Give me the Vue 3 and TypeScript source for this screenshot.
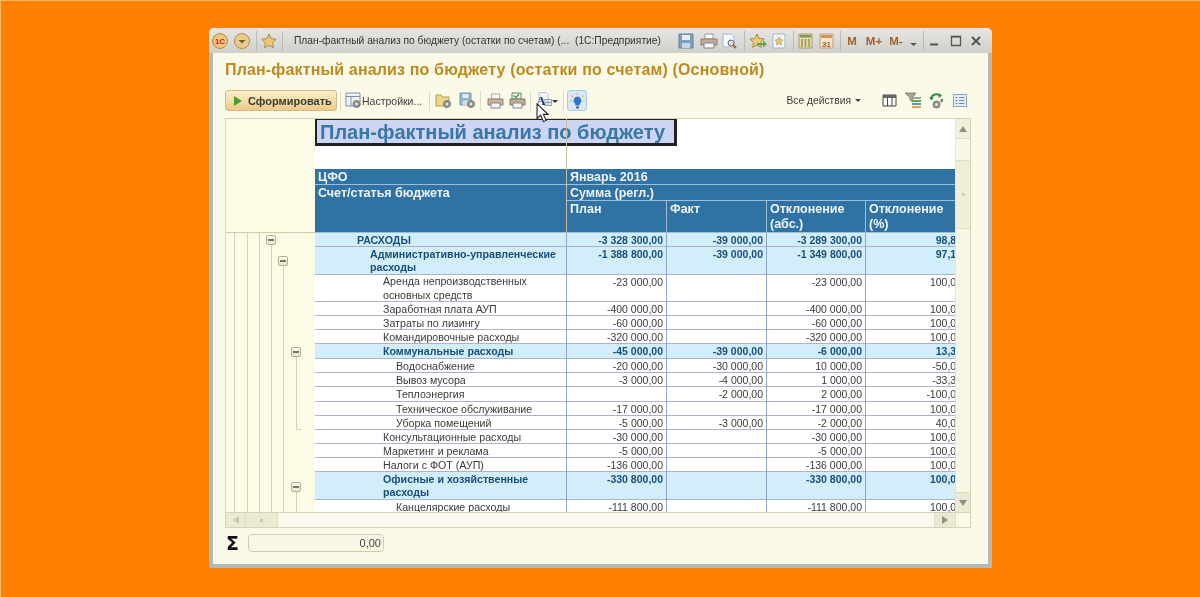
<script setup lang="ts">
interface Row { name: string; lvl: number; kind: 'top' | 'group' | 'leaf'; h: number; v: string[] }
const mk = (name: string, lvl: number, kind: Row['kind'], h: number, a: string, b: string, c: string, d: string): Row => ({ name, lvl, kind, h, v: [a, b, c, d] })
const rows: Row[] = [
  mk('РАСХОДЫ', 0, 'top', 14, '-3 328 300,00', '-39 000,00', '-3 289 300,00', '98,83'),
  mk('Административно-управленческие расходы', 1, 'top', 27.5, '-1 388 800,00', '-39 000,00', '-1 349 800,00', '97,19'),
  mk('Аренда непроизводственных основных средств', 2, 'leaf', 27.5, '-23 000,00', '', '-23 000,00', '100,00'),
  mk('Заработная плата АУП', 2, 'leaf', 14, '-400 000,00', '', '-400 000,00', '100,00'),
  mk('Затраты по лизингу', 2, 'leaf', 14, '-60 000,00', '', '-60 000,00', '100,00'),
  mk('Командировочные расходы', 2, 'leaf', 14, '-320 000,00', '', '-320 000,00', '100,00'),
  mk('Коммунальные расходы', 2, 'group', 15, '-45 000,00', '-39 000,00', '-6 000,00', '13,33'),
  mk('Водоснабжение', 3, 'leaf', 14, '-20 000,00', '-30 000,00', '10 000,00', '-50,00'),
  mk('Вывоз мусора', 3, 'leaf', 14, '-3 000,00', '-4 000,00', '1 000,00', '-33,33'),
  mk('Теплоэнергия', 3, 'leaf', 15, '', '-2 000,00', '2 000,00', '-100,00'),
  mk('Техническое обслуживание', 3, 'leaf', 14, '-17 000,00', '', '-17 000,00', '100,00'),
  mk('Уборка помещений', 3, 'leaf', 14, '-5 000,00', '-3 000,00', '-2 000,00', '40,00'),
  mk('Консультационные расходы', 2, 'leaf', 14, '-30 000,00', '', '-30 000,00', '100,00'),
  mk('Маркетинг и реклама', 2, 'leaf', 14, '-5 000,00', '', '-5 000,00', '100,00'),
  mk('Налоги с ФОТ (АУП)', 2, 'leaf', 14, '-136 000,00', '', '-136 000,00', '100,00'),
  mk('Офисные и хозяйственные расходы', 2, 'group', 28, '-330 800,00', '', '-330 800,00', '100,00'),
  mk('Канцелярские расходы', 3, 'leaf', 14, '-111 800,00', '', '-111 800,00', '100,00'),
]
const guides = [8, 21, 33]
const treeLines = [
  { left: 45, top: 10, height: 270 },
  { left: 57, top: 32, height: 248 },
  { left: 70, top: 123, height: 74 },
  { left: 70, top: 258, height: 22 },
]
const boxes = [
  { left: 40, top: 2 },
  { left: 52, top: 23 },
  { left: 65, top: 114 },
  { left: 65, top: 249 },
]
</script>

<template>
  <div class="page">
    <div class="window">
      <header class="titlebar">
        <svg width="18" height="18" viewBox="0 0 18 18"><circle cx="9" cy="9" r="7.5" fill="#f0c47c" stroke="#b98a4a"/><text x="9" y="12" text-anchor="middle" class="logo">1C</text></svg>
        <svg class="ml4" width="18" height="18" viewBox="0 0 18 18"><circle cx="9" cy="9" r="7.5" fill="#e9c98e" stroke="#b98a4a"/><path d="M5.500 8h7L9 11.500z" fill="#7a5a2a"/></svg>
        <i class="tsep ml5"></i>
        <svg class="ml3" width="18" height="18" viewBox="0 0 18 18"><path d="M9 2l2.200 4.600 5 .7-3.600 3.500.9 5L9 13.400l-4.500 2.400.9-5L1.800 7.300l5-.7z" fill="#f0c674" stroke="#a98a50"/></svg>
        <i class="tsep ml4"></i>
        <span class="wintitle">План-фактный анализ по бюджету (остатки по счетам) (...&nbsp; (1С:Предприятие)</span>
        <div class="ticons">
          <svg width="16" height="16" viewBox="0 0 16 16"><path d="M1 1h14v14H1z" fill="#7d9fc0" stroke="#64809c"/><path d="M4 2h8v5H4z" fill="#e6edf3"/><path d="M4 10h8v5H4z" fill="#c9d4de"/></svg>
          <svg class="ml6" width="18" height="16" viewBox="0 0 18 16"><path d="M5 1h8v5H5z" fill="#fff" stroke="#999"/><path d="M1 6h16v6H1z" fill="#c9a98f" stroke="#8a8078"/><path d="M4 10h10v5H4z" fill="#f4f4f4" stroke="#888"/></svg>
          <svg class="ml3" width="16" height="16" viewBox="0 0 16 16"><path d="M2 1h8l3 3v10H2z" fill="#f5f8fb" stroke="#a9b6c4"/><circle cx="10" cy="10" r="3" fill="#dde6ee" stroke="#6a6a6a"/><path d="M12 12l3 3" stroke="#a65d3a" stroke-width="2"/></svg>
          <i class="tsep ml7"></i>
          <svg class="ml4" width="18" height="16" viewBox="0 0 18 16"><path d="M8 1l2 4.400 5 .6-3.600 3.300.9 5L8 12l-4.300 2.300.9-5L1 6l5-.6z" fill="#eecb72" stroke="#a98a50"/><path d="M8 10h6V7.500l4 3.500-4 3.500V12H8z" fill="#5aa83c"/></svg>
          <svg class="ml5" width="14" height="16" viewBox="0 0 14 16"><path d="M1 1h12v14H1z" fill="#f2f6fa" stroke="#a9b6c4"/><path d="M7 4l1.300 2.600 2.700.4-2 2 .5 2.800L7 10.500l-2.500 1.300.5-2.800-2-2 2.700-.4z" fill="#ecc96e" stroke="#a98a50" stroke-width=".6"/></svg>
          <i class="tsep ml7"></i>
          <svg class="ml4" width="15" height="16" viewBox="0 0 15 16"><path d="M1 1h13v14H1z" fill="#ecdba6" stroke="#a99a6a"/><path d="M2 2h11v2.500H2z" fill="#7f9a5b"/><path d="M4 6v8M7.500 6v8M11 6v8" stroke="#8a9a5a" stroke-width="1.500"/></svg>
          <svg class="ml6" width="15" height="16" viewBox="0 0 15 16"><path d="M1 1h13v14H1z" fill="#f6e6c6" stroke="#b7a27a"/><path d="M2 2h11v3H2z" fill="#d98d5a"/><text x="7.500" y="13.500" text-anchor="middle" class="cal-t">31</text></svg>
          <i class="tsep ml6"></i>
          <span class="mem">M</span><span class="mem">M+</span><span class="mem">M-</span>
          <svg class="ml2" width="9" height="14" viewBox="0 0 9 14"><path d="M1 9h7L4.500 12z" fill="#555"/></svg>
          <i class="tsep ml5"></i>
          <svg class="ml5" width="11" height="12" viewBox="0 0 11 12"><path d="M1 9.500h8" stroke="#555" stroke-width="2"/></svg>
          <svg class="ml10" width="12" height="12" viewBox="0 0 12 12"><path d="M1.500 1.500h9v9h-9z" fill="none" stroke="#555" stroke-width="1.300"/><path d="M1 1.700h10" stroke="#555" stroke-width="1.500"/></svg>
          <svg class="ml8" width="12" height="12" viewBox="0 0 12 12"><path d="M2 2l8 8M10 2l-8 8" stroke="#555" stroke-width="2"/></svg>
        </div>
      </header>

      <main class="body">
        <h1 class="heading">План-фактный анализ по бюджету (остатки по счетам) (Основной)</h1>

        <div class="toolbar">
          <button class="primary"><span class="tri"></span>Сформировать</button>
          <i class="sep ml3"></i>
          <svg class="ml4" width="17" height="17" viewBox="0 0 17 17"><path d="M1 1h14v13H1z" fill="#eef2f6" stroke="#7f92a6"/><path d="M1 4.500h14M6 4.500V14" stroke="#7f92a6"/><circle cx="11.500" cy="12" r="3.500" fill="#9a9a92" stroke="#777"/><circle cx="11.500" cy="12" r="1.200" fill="#eee"/></svg>
          <span class="setup">Настройки...</span>
          <i class="sep ml7"></i>
          <svg class="ml5" width="17" height="17" viewBox="0 0 17 17"><path d="M1 3h5l1.500 2H14v9H1z" fill="#efd68c" stroke="#b79a50"/><circle cx="12" cy="12" r="3.500" fill="#9a9a92" stroke="#777"/><circle cx="12" cy="12" r="1.200" fill="#eee"/></svg>
          <svg class="ml7" width="17" height="17" viewBox="0 0 17 17"><path d="M1 1h11v12H1z" fill="#8fb2d0" stroke="#7a9ab8"/><path d="M3.500 2h6v4h-6z" fill="#e6edf3"/><path d="M3.500 8.500h6V13h-6z" fill="#d1dbe4"/><circle cx="12" cy="12" r="3.500" fill="#9a9a92" stroke="#777"/><circle cx="12" cy="12" r="1.200" fill="#eee"/></svg>
          <i class="sep ml4"></i>
          <svg class="ml6" width="17" height="16" viewBox="0 0 17 16"><path d="M4.500 1h8v5h-8z" fill="#fff" stroke="#aaa"/><path d="M1 6h15v6H1z" fill="#c9b09a" stroke="#8a8078"/><path d="M4 10h9v5H4z" fill="#f4f4f4" stroke="#888"/></svg>
          <svg class="ml5" width="17" height="17" viewBox="0 0 17 17"><path d="M3 1h9v6H3z" fill="#fff" stroke="#5a8a4a"/><path d="M4.500 3.500L7 5.500l3-3.500" fill="none" stroke="#3c9a3c" stroke-width="1.300"/><path d="M1 7h15v6H1z" fill="#c3ab94" stroke="#7f7a70"/><path d="M4 11h9v5H4z" fill="#f4f4f4" stroke="#888"/></svg>
          <i class="sep ml4"></i>
          <svg class="ml6" width="15" height="17" viewBox="0 0 15 17"><path d="M2 .5h7l2 2v5H2z" fill="#f5f8fb" stroke="#b7c2cd"/><path d="M8 7.500h6.500v6H8zM8 10.500h6.500M11 7.500v6" fill="#eef2f6" stroke="#8ca0b4"/><text x="-.5" y="13" class="a-t">A</text></svg>
          <svg class="caret" width="7" height="5" viewBox="0 0 7 5"><path d="M0 1h6L3 4z" fill="#333"/></svg>
          <i class="sep ml4"></i>
          <button class="bulb ml3">
            <svg width="17" height="18" viewBox="0 0 17 18"><path d="M8.500 4.500a4 4 0 0 0-2.500 7l.6 2h3.800l.6-2a4 4 0 0 0-2.500-7z" fill="#2f74c8"/><path d="M7 14.500h3v2H7z" fill="#45658f"/><path d="M8.500 1v2M2.500 3.500L4 5M14.500 3.500L13 5M1 9h2M14 9h2" stroke="#e2b33e" stroke-width="1.200"/></svg>
          </button>
          <span class="spacer"></span>
          <span class="all">Все действия<svg class="c2" width="7" height="5" viewBox="0 0 7 5"><path d="M0 1h6L3 4z" fill="#444"/></svg></span>
          <svg class="ml20" width="15" height="13" viewBox="0 0 15 13"><path d="M1 1h13v11H1z" fill="#fff" stroke="#444"/><path d="M1 1h13v3H1z" fill="#666"/><path d="M5.500 4v8M10 4v8" stroke="#444"/></svg>
          <svg class="ml8" width="16" height="17" viewBox="0 0 16 17"><path d="M0 1h11L7.500 5.500V10L5 8V5.500z" fill="#a9a597" stroke="#8a8678"/><path d="M7 6h9" stroke="#9aa5a0" stroke-width="2"/><path d="M7 9h9" stroke="#6fa84c" stroke-width="2"/><path d="M7 12h9" stroke="#4f9bc9" stroke-width="2"/><path d="M7 15h9" stroke="#e0a845" stroke-width="2"/></svg>
          <svg class="ml7" width="16" height="17" viewBox="0 0 16 17"><path d="M3 7a5.500 5.500 0 0 1 9.500-3M14 7a5 5 0 0 1-1 3" fill="none" stroke="#2e8f44" stroke-width="2"/><path d="M10.500 1l3.500 2.500-3.500 2.500z" fill="#2e8f44"/><path d="M1 5.500l2.500 3 2.500-3z" fill="#2e8f44"/><circle cx="8.500" cy="12.500" r="3.500" fill="#9a9a92" stroke="#777"/><circle cx="8.500" cy="12.500" r="1.200" fill="#eee"/></svg>
          <svg class="ml9 endicon" width="14" height="13" viewBox="0 0 14 13"><path d="M.5 .5h13v12H.5z" fill="#e6eef6" stroke="#8ca3ba"/><path d="M2.500 3.500h2M2.500 6.500h2M2.500 9.500h2M6 3.500h5.500M6 6.500h5.500M6 9.500h5.500" stroke="#6a88a6"/></svg>
        </div>

        <section class="grid">
          <div class="viewport">
            <aside class="gutter">
              <div class="gutter-head"></div>
              <div class="gutter-tree">
                <i v-for="g in guides" :key="g" class="guide" :style="{ left: g + 'px' }"></i>
                <i v-for="(t, i) in treeLines" :key="'t' + i" class="guide" :style="{ left: t.left + 'px', top: t.top + 'px', height: t.height + 'px' }"></i>
                <i class="tick"></i>
                <span v-for="(b, i) in boxes" :key="'b' + i" class="minus" :style="{ left: b.left + 'px', top: b.top + 'px' }"></span>
              </div>
            </aside>
            <div class="sheet">
              <div class="report-title"><span>План-фактный анализ по бюджету</span></div>
              <div class="blank"></div>
              <div class="hrow h16"><div class="c name">ЦФО</div><div class="c span">Январь 2016</div></div>
              <div class="hmerge">
                <div class="c name">Счет/статья бюджета</div>
                <div class="hright">
                  <div class="c sub">Сумма (регл.)</div>
                  <div class="hcols">
                    <div class="c">План</div><div class="c">Факт</div><div class="c">Отклонение (абс.)</div><div class="c">Отклонение (%)</div>
                  </div>
                </div>
              </div>
              <div v-for="r in rows" :key="r.name" class="row" :class="r.kind" :style="{ height: r.h + 'px' }">
                <div class="cell name-cell" :class="'lvl' + r.lvl">{{ r.name }}</div>
                <div v-for="(val, j) in r.v" :key="j" class="cell num">{{ val }}</div>
              </div>
              <i class="freeze"></i>
            </div>
            <div class="vscroll">
              <span class="sbtn"><i class="arrow up"></i></span>
              <span class="strack t1"></span>
              <span class="sthumb"><i></i></span>
              <span class="grow"></span>
              <span class="sbtn"><i class="arrow down"></i></span>
            </div>
          </div>
          <div class="hscroll">
            <span class="hbtn w"><i class="arrow left"></i></span>
            <span class="hbtn x"><i></i></span>
            <span class="grow"></span>
            <span class="hbtn right-btn"><i class="arrow right"></i></span>
            <span class="corner"></span>
          </div>
        </section>

        <div class="sumbar">
          <span class="sigma">Σ</span>
          <span class="sumbox">0,00</span>
        </div>
      </main>
    </div>

    <svg class="cursor" width="13" height="20" viewBox="0 0 14 22"><path d="M1 1v16l4-3.500 3 7 3-1.300-3-6.700h5z" fill="#fff" stroke="#222" stroke-width="1.200"/></svg>
  </div>
</template>

<style>
html, body { margin: 0; background: #ff8000; }
</style>

<style scoped>
* { box-sizing: border-box; }
.page {
  position: relative;
  width: 1200px;
  height: 597px;
  background: #ff8000;
  padding: 28px 208px 29px 209px;
  font-family: "Liberation Sans", Arial, sans-serif;
  overflow: hidden;
  box-shadow: inset 1px 1px 0 #f7b862;
  filter: blur(0.35px);
}
.ml2 { margin-left: 2px; }
.ml3 { margin-left: 3px; }
.ml4 { margin-left: 4px; }
.ml5 { margin-left: 5px; }
.ml6 { margin-left: 6px; }
.ml7 { margin-left: 7px; }
.ml8 { margin-left: 8px; }
.ml9 { margin-left: 9px; }
.ml10 { margin-left: 10px; }
.ml20 { margin-left: 20px; }
svg { flex: none; display: block; }
.window {
  height: 540px;
  display: flex;
  flex-direction: column;
  border: 1px solid #b9b9b4;
  border-width: 0 4px 4px 4px;
  border-radius: 5px 5px 0 0;
  background: #fbfae9;
}
.titlebar {
  height: 25px;
  margin: 0 -4px;
  padding: 0 10px 0 2px;
  display: flex;
  align-items: center;
  background: linear-gradient(#e6e6e3, #cfcfcb);
  border-radius: 5px 5px 0 0;
  flex: none;
}
.logo { font: bold 8px "Liberation Sans", sans-serif; fill: #c02a10; }
.tsep { width: 1px; height: 20px; background: #b9b9b5; flex: none; }
.wintitle { font-size: 10.25px; color: #333; white-space: nowrap; margin-left: 11px; }
.ticons { margin-left: auto; display: flex; align-items: center; }
.mem { width: 22px; text-align: center; color: #a4602c; font-weight: bold; font-size: 11.5px; }
.cal-t { font: bold 8px "Liberation Sans", sans-serif; fill: #b4552a; }
.body {
  flex: 1;
  min-height: 0;
  padding: 0 16px 0 12px;
  display: flex;
  flex-direction: column;
}
.heading {
  margin: 7px 0 0;
  height: 20px;
  font-size: 16px;
  line-height: 20px;
  font-weight: bold;
  color: #bd8a1f;
  white-space: nowrap;
  letter-spacing: 0.15px;
}
.toolbar {
  margin-top: 8px;
  height: 25px;
  display: flex;
  align-items: center;
  flex: none;
}
.primary {
  width: 112px;
  height: 21px;
  padding: 0 0 0 8px;
  border: 1px solid #d3b981;
  border-radius: 3px;
  background: linear-gradient(#fdefca, #eec98b);
  font: bold 11px "Liberation Sans", sans-serif;
  color: #3a3a2c;
  display: flex;
  align-items: center;
  gap: 6px;
  white-space: nowrap;
}
.tri { width: 0; height: 0; border-left: 8px solid #4c9e2c; border-top: 5px solid transparent; border-bottom: 5px solid transparent; }
.sep { width: 1px; height: 20px; background: #dcdac8; flex: none; }
.setup { font-size: 10.5px; color: #3c3c3c; white-space: nowrap; width: 60px; }
.a-t { font: bold 12.5px "Liberation Serif", serif; fill: #17308a; }
.caret { margin-top: 1px; }
.bulb {
  width: 20px;
  height: 21px;
  padding: 0;
  border: 1px solid #aac8e8;
  border-radius: 3px;
  background: #d8e8f8;
  display: flex;
  align-items: center;
  justify-content: center;
}
.spacer { flex: 1; }
.all { font-size: 10.25px; color: #3c3c3c; white-space: nowrap; display: flex; align-items: center; }
.c2 { margin-left: 4px; }
.endicon { margin-right: 5px; }
.grid {
  margin-top: 5px;
  width: 746px;
  height: 410px;
  border: 1px solid #d5d3b6;
  display: flex;
  flex-direction: column;
  flex: none;
  background: #fbfae9;
}
.viewport { flex: 1; min-height: 0; display: flex; overflow: hidden; }
.gutter { width: 89px; flex: none; display: flex; flex-direction: column; background: #fbfbe6; }
.gutter-head { height: 114px; border-bottom: 1px solid #cfccaa; flex: none; }
.gutter-tree { position: relative; flex: 1; }
.guide { position: absolute; top: 0; bottom: 0; width: 1px; background: #d5d3ae; }
.tick { position: absolute; left: 70px; top: 196px; width: 5px; height: 1px; background: #d5d3ae; }
.minus {
  position: absolute;
  width: 10px;
  height: 10px;
  border: 1px solid #b3b08c;
  border-radius: 2px;
  background: linear-gradient(#fdfdf4, #e7e5cc);
}
.minus::after { content: ""; position: absolute; left: 1px; right: 1px; top: 3px; height: 2px; background: #77766a; }
.sheet { position: relative; width: 640px; flex: none; background: #fff; overflow: hidden; }
.report-title { height: 27px; }
.report-title span {
  display: block;
  width: 362px;
  height: 27px;
  padding-left: 3px;
  background: #ccd6f2;
  border: 1px solid #222;
  border-width: 1px 3px 3px 2px;
  font-size: 20px;
  line-height: 24px;
  font-weight: bold;
  color: #3a77a8;
  white-space: nowrap;
}
.blank { height: 23px; }
.hrow, .hmerge { display: grid; grid-template-columns: 251px 1fr; background: #2f72a3; color: #eef4f8; font-size: 12.5px; font-weight: bold; }
.h16 { height: 16px; border-bottom: 1px solid #9fbdd6; }
.hmerge { height: 48px; border-bottom: 1px solid #9fbdd6; }
.c { padding: 1px 3px 0; line-height: 15px; white-space: normal; overflow: hidden; }
.hright { display: flex; flex-direction: column; border-left: 1px solid #9fbdd6; }
.span { border-left: 1px solid #9fbdd6; }
.sub { height: 16px; border-bottom: 1px solid #9fbdd6; }
.hcols { flex: 1; display: grid; grid-template-columns: 99px 100px 99px 100px; }
.hcols .c { border-left: 1px solid #9fbdd6; }
.hcols .c:first-child { border-left: 0; }
.row { display: grid; grid-template-columns: 251px 100px 100px 99px 100px; font-size: 10.5px; line-height: 14px; color: #3a3a3a; border-bottom: 1px solid #aab3cb; }
.row.top, .row.group { background: #d3eefb; color: #164f7c; font-weight: bold; }
.cell { overflow: hidden; border-left: 1px solid #8ea4cc; padding-right: 3px; margin-bottom: -1px; }
.name-cell { border-left: 0; padding-top: 0.6px; padding-right: 6px; font-size: 10.65px; line-height: 13.5px; }
.lvl0 { padding-left: 42px; }
.lvl1 { padding-left: 55px; }
.lvl2 { padding-left: 68px; }
.lvl3 { padding-left: 81px; }
.num { text-align: right; white-space: nowrap; }
.freeze { position: absolute; left: 251px; top: 0; height: 114px; width: 1px; background: #c3bfa0; }
.vscroll { width: 15px; flex: none; display: flex; flex-direction: column; background: #f8f7e6; border-left: 1px solid #e6e4cc; }
.sbtn { height: 20px; flex: none; display: flex; align-items: center; justify-content: center; background: #f2f0da; border-bottom: 1px solid #dedcc2; }
.sbtn:last-child { border-bottom: 0; border-top: 1px solid #dedcc2; background: #ecead2; }
.strack.t1 { height: 21px; flex: none; }
.grow { flex: 1; }
.sthumb { height: 69px; flex: none; background: #f1eed6; border-top: 1px solid #e0ddc2; border-bottom: 1px solid #e0ddc2; display: flex; align-items: center; justify-content: center; }
.sthumb i { width: 3px; height: 3px; background: #d0cfc0; }
.arrow { width: 0; height: 0; display: block; }
.arrow.up { border: 4px solid transparent; border-top: 0; border-bottom: 6px solid #8f8f83; }
.arrow.down { border: 4px solid transparent; border-bottom: 0; border-top: 6px solid #8f8f83; }
.arrow.left { border: 4px solid transparent; border-left: 0; border-right: 6px solid #c8c7b4; }
.arrow.right { border: 4px solid transparent; border-right: 0; border-left: 6px solid #8f8f83; }
.hscroll { height: 15px; flex: none; display: flex; background: #f9f8ea; border-top: 1px solid #d5d3b6; }
.hbtn { display: flex; align-items: center; justify-content: center; background: #ece9d3; flex: none; border-right: 1px solid #dedcc2; }
.hbtn.w { width: 20px; }
.hbtn.x { width: 32px; }
.hbtn.x i { width: 3px; height: 3px; background: #c8c7b4; }
.right-btn { width: 21px; border-left: 1px solid #dedcc2; border-right: 0; }
.corner { width: 15px; flex: none; border-left: 1px solid #dedcc2; }
.sumbar { margin-top: 6px; display: flex; align-items: center; height: 18px; flex: none; }
.sigma { width: 23px; font: bold 19px "DejaVu Sans", sans-serif; color: #111; padding-left: 1px; line-height: 18px; }
.sumbox {
  width: 136px;
  height: 18px;
  border: 1px solid #cfcdb0;
  border-radius: 4px;
  background: #f8f7e6;
  font-size: 11px;
  line-height: 16px;
  color: #444;
  text-align: right;
  padding-right: 2px;
}
.cursor { position: absolute; left: 536px; top: 103px; }
</style>
